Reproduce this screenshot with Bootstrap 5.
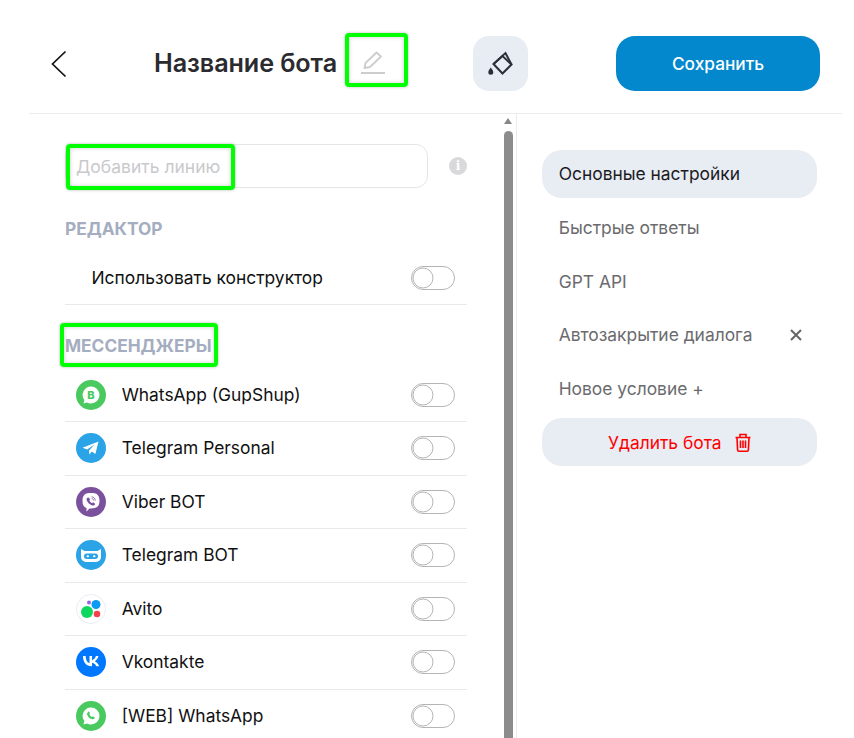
<!DOCTYPE html>
<html lang="ru">
<head>
    <meta charset="UTF-8">
    <title>Название бота</title>
    <meta name="viewport" content="width=device-width, initial-scale=1">
    <link href="https://cdn.jsdelivr.net/npm/bootstrap@5.3.3/dist/css/bootstrap.min.css" rel="stylesheet">
    <style>
        html, body { height: 738px; overflow: hidden; }
        body { font-family: Inter, "Liberation Sans", sans-serif; background: #fff; color: #111; }

        .page-wrap { width: 813px; margin-left: 29px; }

        /* header */
        .top-bar { height: 114px; border-bottom: 1px solid #ececee; padding-left: 22px; padding-top: 36px; }
        .back-btn { width: 16px; height: 55px; flex: none; }
        .bot-title-box { position: relative; margin-left: 87px; width: 319px; height: 55px; }
        .bot-title { font-size: 25.2px; font-weight: 600; color: #2b2b2f; margin: 0; white-space: nowrap; line-height: 55px; letter-spacing: -.1px; }
        .edit-ico { margin-left: 24px; margin-top: -2px; }
        .paint-btn { width: 55px; height: 55px; background: #e8ecf3; border: 0; border-radius: 16px; padding: 0; flex: none; }
        .save-btn { width: 204px; height: 55px; margin-left: 88px; background: #0388cd; color: #fff; border: 0; border-radius: 19px; font-size: 17.3px; font-weight: 500; flex: none; }
        .save-btn:hover { background: #0388cd; color: #fff; }

        /* green marks from the screenshot */
        .green-mark { position: absolute; border: 4px solid #0f0; border-radius: 4px; box-shadow: 0 0 3px rgba(0, 0, 0, .3), inset 0 0 4px rgba(0, 0, 0, .2); pointer-events: none; }
        .mark-edit { left: 191px; top: -3px; width: 63px; height: 54px; }
        .mark-input { left: 1px; top: 0; width: 169px; height: 46px; }
        .mark-head { left: -5px; top: -13px; width: 158px; height: 44px; }

        /* columns */
        .left-col { width: 488px; height: 624px; border-right: 1px solid #ececee; flex: none; }
        .left-body { width: 438px; padding-left: 36px; flex: none; }
        .add-line-box { position: relative; margin-top: 30px; height: 44px; }
        .add-line { width: 363px; height: 44px; border: 1px solid #e6e6ea; border-radius: 12px; padding: 0 10px; font-size: 17.5px; box-shadow: none; }
        .add-line::placeholder { color: #c9c9cc; opacity: 1; }
        .info-dot { width: 18px; height: 18px; border-radius: 50%; background: #d9d9dc; color: #fff; font: 700 12px/18px "DejaVu Serif", serif; text-align: center; margin-left: 21px; margin-top: -1px; }

        .sect-head { position: relative; font-size: 17.3px; font-weight: 700; color: #a5adc0; line-height: 20px; margin: 0; }
        .sect-editor { margin-top: 31px; }
        .sect-msg { margin-top: 31px; }

        .opt-row { height: 53.5px; border-bottom: 1px solid #e9e9ec; font-size: 17.4px; color: #111; padding-right: 12px; }
        .opt-row:last-child { border-bottom: 0; }
        .opt-row .form-check-input { width: 44px; height: 24px; margin: 0; flex: none; float: none; background-color: #fff; border: 1px solid #b5b5b5; border-radius: 12px; box-shadow: none;
            background-size: auto; background-position: left center;
            background-image: url("data:image/svg+xml,%3Csvg xmlns='http://www.w3.org/2000/svg' width='22' height='22'%3E%3Ccircle cx='11' cy='11' r='10' fill='%23fff' stroke='%23b5b5b5'/%3E%3C/svg%3E"); }
        .opt-first { padding-left: 26.5px; margin-top: 13px; height: 53px; }
        .msg-row { padding-left: 11px; margin: 0; }
        .msg-list { margin-top: 12.5px; }
        .msg-ico { width: 30px; height: 30px; flex: none; margin-right: 15.700px; }

        /* scrollbar */
        .fake-scroll { width: 9px; margin-left: 30px; margin-top: 4px; flex: none; }
        .scroll-arrow { width: 0; height: 0; border-left: 4.5px solid transparent; border-right: 4.5px solid transparent; border-bottom: 6px solid #888; }
        .scroll-thumb { height: 640px; margin-top: 7px; background: #8c8c8c; border-radius: 5px 5px 0 0; }
        .left-body + .fake-scroll { margin-left: 37px; }

        /* right menu */
        .right-col { padding: 36px 0 0 25px; width: 300px; }
        .side-menu .nav-link { height: 47.5px; margin-bottom: 6.2px; padding: 1px 17px 0 16.700px; border-radius: 20px; color: #6b6b6e; font-size: 17.4px; display: flex; align-items: center; }
        .side-menu .nav-link.active { background: #e8ecf3; color: #1b1b1f; }
        .side-menu .del-link { background: #e8ecf3; color: #f00; justify-content: center; gap: 13px; }
        .close-x { margin-left: auto; margin-right: -2px; }
    </style>
</head>
<body>
    <div class="page-wrap">
        <!-- Header -->
        <div class="top-bar d-flex">
            <a class="back-btn d-flex align-items-center" href="#">
                <svg width="16" height="28" viewBox="0 0 16 28" fill="none" stroke="#111" stroke-width="1.7"><path d="M14.5 1.5 1.5 14l13 12.5"/></svg>
            </a>
            <div class="bot-title-box d-flex align-items-center">
                <h1 class="bot-title">Название бота</h1>
                <svg class="edit-ico" width="24" height="25" viewBox="0 0 24 25" fill="none" stroke="#cdcdcf" stroke-width="1.800">
                    <path d="M3.500 18l1-5L15.500 2.500l4.500 4L9 17z" stroke-linejoin="round"/>
                    <path d="M0 23h24" stroke-width="2"/>
                </svg>
                <span class="green-mark mark-edit"></span>
            </div>
            <button class="paint-btn d-flex align-items-center justify-content-center" type="button" aria-label="Тема">
                <svg width="26" height="26" viewBox="0 0 26 26" fill="none" stroke="#2b2f3a" stroke-width="2">
                    <path d="M5.500 13l9 9.500 9-9-9-8.500z"/>
                    <path d="M5.500 13 17.500 2l6 11.500"/>
                    <path d="M2.800 16.500c-1.500 2-2.500 3.300-2.500 4.700a2.500 2.500 0 0 0 5 0c0-1.400-1-2.700-2.500-4.700z" fill="#2b2f3a" stroke="none"/>
                </svg>
            </button>
            <button class="btn save-btn" type="button">Сохранить</button>
        </div>

        <div class="d-flex">
            <!-- Left column -->
            <div class="left-col d-flex overflow-hidden">
                <div class="left-body">
                    <div class="add-line-box d-flex align-items-center">
                        <input class="form-control add-line" type="text" placeholder="Добавить линию">
                        <div class="info-dot">i</div>
                        <span class="green-mark mark-input"></span>
                    </div>

                    <h6 class="sect-head sect-editor">РЕДАКТОР</h6>
                    <div class="opt-row opt-first d-flex align-items-center justify-content-between">
                        <span>Использовать конструктор</span>
                        <input class="form-check-input" type="checkbox" role="switch">
                    </div>

                    <h6 class="sect-head sect-msg">МЕССЕНДЖЕРЫ<span class="green-mark mark-head"></span></h6>
                    <div class="msg-list">
                        <div class="opt-row msg-row d-flex align-items-center">
                            <svg class="msg-ico" viewBox="0 0 30 30">
                                <circle cx="15" cy="15" r="15" fill="#4ac95f"/>
                                <path d="M15 6.500a8.500 8.500 0 0 1 0 17c-1.500 0-2.900-.4-4.100-1l-3.400.900.900-3.300A8.500 8.500 0 0 1 15 6.500z" fill="#fff"/>
                                <text x="15" y="19" text-anchor="middle" font-family="Inter, sans-serif" font-size="11" font-weight="800" fill="#4ac95f">B</text>
                            </svg>
                            <span class="flex-grow-1">WhatsApp (GupShup)</span>
                            <input class="form-check-input" type="checkbox" role="switch">
                        </div>
                        <div class="opt-row msg-row d-flex align-items-center">
                            <svg class="msg-ico" viewBox="0 0 30 30">
                                <circle cx="15" cy="15" r="15" fill="#2aa4e6"/>
                                <path d="M22.500 8.500 6.500 14.800l4.700 1.600 7.300-5-5.400 6 .2 4 2.600-2.900 3.500 2.500z" fill="#fff"/>
                            </svg>
                            <span class="flex-grow-1">Telegram Personal</span>
                            <input class="form-check-input" type="checkbox" role="switch">
                        </div>
                        <div class="opt-row msg-row d-flex align-items-center">
                            <svg class="msg-ico" viewBox="0 0 30 30">
                                <circle cx="15" cy="15" r="15" fill="#7b519d"/>
                                <path d="M15 6c5.500 0 8.500 1.700 8.500 7.700s-3 7.700-8.500 7.700h-1.500L10.500 24.500v-3.500c-3-1-4-3.200-4-7.300C6.500 7.700 9.500 6 15 6z" fill="#fff"/>
                                <path d="M11.500 10.800c.6-.6 1.300-.5 1.700.2l.6 1c.3.500.1 1-.4 1.400.5 1.200 1.400 2.100 2.600 2.600.4-.5.900-.7 1.400-.4l1 .6c.7.400.8 1.100.2 1.700-.8.800-2 .9-3 .4-2.300-1-4-2.700-4.900-5-.4-1-.100-1.800.8-2.500z" fill="#7b519d"/>
                                <path d="M15.500 9.800c2.200.1 3.700 1.600 3.800 3.800M15.700 11.500c1.100.1 1.900.9 2 2" fill="none" stroke="#7b519d" stroke-width=".8"/>
                            </svg>
                            <span class="flex-grow-1">Viber BOT</span>
                            <input class="form-check-input" type="checkbox" role="switch">
                        </div>
                        <div class="opt-row msg-row d-flex align-items-center">
                            <svg class="msg-ico" viewBox="0 0 30 30">
                                <circle cx="15" cy="15" r="15" fill="#2aa4e6"/>
                                <path d="M5 9l3.500 2h13L25 9v8a5 5 0 0 1-5 5H10a5 5 0 0 1-5-5z" fill="#fff"/>
                                <rect x="8" y="13.500" width="14" height="5.500" rx="2.750" fill="#2aa4e6"/>
                                <rect x="10.500" y="15.200" width="2.500" height="2" rx="1" fill="#fff"/>
                                <rect x="17" y="15.200" width="2.500" height="2" rx="1" fill="#fff"/>
                            </svg>
                            <span class="flex-grow-1">Telegram BOT</span>
                            <input class="form-check-input" type="checkbox" role="switch">
                        </div>
                        <div class="opt-row msg-row d-flex align-items-center">
                            <svg class="msg-ico" viewBox="0 0 30 30">
                                <circle cx="15" cy="15" r="14.500" fill="#fff" stroke="#e8ecf3"/>
                                <circle cx="11" cy="18" r="6" fill="#0ed760"/>
                                <circle cx="20" cy="10.500" r="4.500" fill="#0a9cf5"/>
                                <circle cx="21" cy="20" r="3.300" fill="#f5404f"/>
                                <circle cx="13" cy="8.500" r="2" fill="#9a62e8"/>
                            </svg>
                            <span class="flex-grow-1">Avito</span>
                            <input class="form-check-input" type="checkbox" role="switch">
                        </div>
                        <div class="opt-row msg-row d-flex align-items-center">
                            <svg class="msg-ico" viewBox="0 0 30 30">
                                <circle cx="15" cy="15" r="15" fill="#07f"/>
                                <path transform="translate(4 4) scale(.73)" d="M16 21C8.500 21 4.200 15.800 4 7h3.800c.1 6.400 3 9.100 5.200 9.700V7h3.500v5.500c2.200-.2 4.500-2.700 5.300-5.500h3.500c-.6 3.500-3.100 6-4.900 7 1.800.8 4.700 3 5.800 7h-3.900c-.8-2.600-2.900-4.600-5.800-4.900V21z" fill="#fff"/>
                            </svg>
                            <span class="flex-grow-1">Vkontakte</span>
                            <input class="form-check-input" type="checkbox" role="switch">
                        </div>
                        <div class="opt-row msg-row d-flex align-items-center">
                            <svg class="msg-ico" viewBox="0 0 30 30">
                                <circle cx="15" cy="15" r="15" fill="#4ac95f"/>
                                <path d="M15 6.500a8.500 8.500 0 0 1 0 17c-1.500 0-2.900-.4-4.100-1l-3.400.900.900-3.300A8.500 8.500 0 0 1 15 6.500z" fill="#fff"/>
                                <path d="M12 10.800c.5-.4 1-.3 1.300.3l.5 1.100c.2.400 0 .8-.4 1.200.6 1.200 1.400 2 2.600 2.600.4-.5.800-.6 1.200-.4l1.100.6c.5.300.6.800.2 1.300-.7.800-1.800 1-2.900.6-2.100-.8-3.600-2.300-4.400-4.400-.3-1-.100-1.800.8-2.400z" fill="#4ac95f"/>
                            </svg>
                            <span class="flex-grow-1">[WEB] WhatsApp</span>
                            <input class="form-check-input" type="checkbox" role="switch">
                        </div>
                    </div>
                </div>
                <div class="fake-scroll">
                    <div class="scroll-arrow"></div>
                    <div class="scroll-thumb"></div>
                </div>
            </div>

            <!-- Right column -->
            <div class="right-col">
                <nav class="nav flex-column side-menu">
                    <a class="nav-link active" href="#">Основные настройки</a>
                    <a class="nav-link" href="#">Быстрые ответы</a>
                    <a class="nav-link" href="#">GPT API</a>
                    <a class="nav-link" href="#">Автозакрытие диалога
                        <svg class="close-x" width="12" height="12" viewBox="0 0 12 12" stroke="#666" stroke-width="2"><path d="M1 1l10 10M11 1 1 11"/></svg>
                    </a>
                    <a class="nav-link" href="#">Новое условие +</a>
                    <a class="nav-link del-link" href="#">Удалить бота
                        <svg width="16" height="19" viewBox="0 0 16 19" fill="none" stroke="#f00" stroke-width="1.600">
                            <path d="M.5 4.500h15M5 4V1.500h6V4M2 4.500l.6 12.500a1.300 1.300 0 0 0 1.300 1.200h8.200a1.300 1.300 0 0 0 1.300-1.200L14 4.500M5.500 7.500v7.500M8 7.500v7.500M10.500 7.500v7.500"/>
                        </svg>
                    </a>
                </nav>
            </div>
        </div>
    </div>

    <script src="https://cdn.jsdelivr.net/npm/bootstrap@5.3.3/dist/js/bootstrap.bundle.min.js"></script>
</body>
</html>
